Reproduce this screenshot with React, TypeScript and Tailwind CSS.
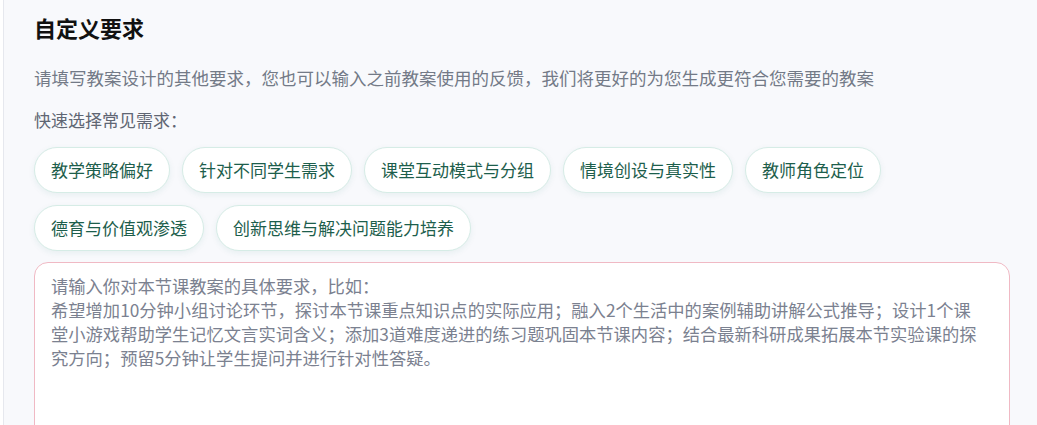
import { useState } from 'react'

// 常見需求快捷標籤(點擊後附加到輸入框)
const QUICK_TAGS = [
  '教学策略偏好',
  '针对不同学生需求',
  '课堂互动模式与分组',
  '情境创设与真实性',
  '教师角色定位',
  '德育与价值观渗透',
  '创新思维与解决问题能力培养',
]

const PLACEHOLDER =
  '请输入你对本节课教案的具体要求，比如：\n希望增加10分钟小组讨论环节，探讨本节课重点知识点的实际应用；融入2个生活中的案例辅助讲解公式推导；设计1个课堂小游戏帮助学生记忆文言实词含义；添加3道难度递进的练习题巩固本节课内容；结合最新科研成果拓展本节实验课的探究方向；预留5分钟让学生提问并进行针对性答疑。'

export default function App() {
  const [text, setText] = useState('')

  return (
    <div
      className="min-h-screen bg-white pl-[3px]"
      style={{ fontFamily: '"Noto Sans CJK SC", "Noto Sans", sans-serif' }}
    >
      <section className="min-h-screen border-l border-[#e6e8ee] bg-[#f8f9fc] pl-[30px] pr-[27px] pt-[12px]">
        <h2 className="text-[22px] font-bold leading-[30px] text-[#111]">自定义要求</h2>
        <p className="mt-[22px] text-[17.5px] leading-[28px] text-[#737a87]">
          请填写教案设计的其他要求，您也可以输入之前教案使用的反馈，我们将更好的为您生成更符合您需要的教案
        </p>
        <p className="mt-[14px] text-[17px] leading-[28px] text-[#5f6673]">快速选择常见需求：</p>

        <div className="mt-[13px] flex flex-wrap gap-x-[12px] gap-y-[12px] pr-[120px]">
          {QUICK_TAGS.map((t) => (
            <button
              key={t}
              type="button"
              onClick={() => setText((s) => (s ? s + '\n' : '') + t + '：')}
              className="h-[46px] rounded-full border border-[#d6ece6] bg-white px-4 text-[17px] text-[#1d5e4c] shadow-[0_2px_6px_rgba(30,120,100,0.08)]"
            >
              {t}
            </button>
          ))}
        </div>

        <textarea
          value={text}
          onChange={(e) => setText(e.target.value)}
          placeholder={PLACEHOLDER}
          className="mt-[11px] block h-[220px] w-full resize-none rounded-[14px] border border-[#f0b9c4] bg-white pb-3 pl-4 pr-[30px] pt-[11px] text-[17.3px] leading-[24px] text-[#333] outline-none placeholder:text-[#7b8190]"
        />
      </section>
    </div>
  )
}
